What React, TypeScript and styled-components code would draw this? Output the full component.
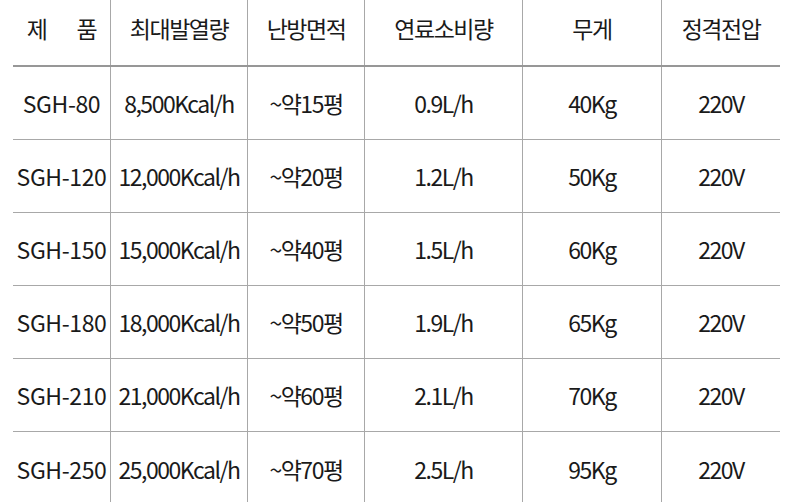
import React from "react";
import styled, { createGlobalStyle } from "styled-components";

const rows = [
  ["SGH-80", "8,500Kcal/h", "~약15평", "0.9L/h", "40Kg", "220V"],
  ["SGH-120", "12,000Kcal/h", "~약20평", "1.2L/h", "50Kg", "220V"],
  ["SGH-150", "15,000Kcal/h", "~약40평", "1.5L/h", "60Kg", "220V"],
  ["SGH-180", "18,000Kcal/h", "~약50평", "1.9L/h", "65Kg", "220V"],
  ["SGH-210", "21,000Kcal/h", "~약60평", "2.1L/h", "70Kg", "220V"],
  ["SGH-250", "25,000Kcal/h", "~약70평", "2.5L/h", "95Kg", "220V"],
];

const headers = ["최대발열량", "난방면적", "연료소비량", "무게", "정격전압"];

const App = () => {
  return (
    <>
      <Global />
      <Page>
        <SpecTable>
          <HeadRow>
            <Cell>
              <Spread>
                <span>제</span>
                <span>품</span>
              </Spread>
            </Cell>
            {headers.map((h) => (
              <Cell key={h}>{h}</Cell>
            ))}
          </HeadRow>
          {rows.map((r, i) => (
            <BodyRow key={r[0]} last={i === rows.length - 1}>
              {r.map((c, j) => (
                <Cell key={j} model={j === 0}>
                  {c}
                </Cell>
              ))}
            </BodyRow>
          ))}
        </SpecTable>
      </Page>
    </>
  );
};

//style-----------------------------------------
const Global = createGlobalStyle`
  html, body {
    margin: 0;
    padding: 0;
    background: #ffffff;
  }
  body {
    font-family: "Noto Sans CJK KR", "Noto Sans", sans-serif;
    color: #1a1a1a;
  }
`;
const Page = styled.div`
  width: 793px;
  height: 502px;
  overflow: hidden;
  padding-left: 13px;
  box-sizing: border-box;
`;
const SpecTable = styled.div`
  display: flex;
  flex-direction: column;
  width: 767px;
`;
const RowBase = styled.div`
  display: grid;
  grid-template-columns: 97px 137px 117px 158px 139px 119px;
`;
const HeadRow = styled(RowBase)`
  height: 67px;
  border-bottom: 2px solid #979797;
  box-sizing: border-box;
  & > div {
    padding-bottom: 10px;
  }
`;
const BodyRow = styled(RowBase)<{ last?: boolean }>`
  height: 73px;
  box-sizing: border-box;
  border-bottom: ${(p) => (p.last ? "none" : "1px solid #a8a8a8")};
`;
const Cell = styled.div<{ model?: boolean }>`
  display: flex;
  align-items: center;
  justify-content: center;
  font-size: 23px;
  letter-spacing: ${(p) => (p.model ? "-0.4px" : "-1.5px")};
  white-space: nowrap;
  & + & {
    border-left: 1px solid #a8a8a8;
  }
`;
const Spread = styled.div`
  display: flex;
  gap: 30px;
`;

export default App;
